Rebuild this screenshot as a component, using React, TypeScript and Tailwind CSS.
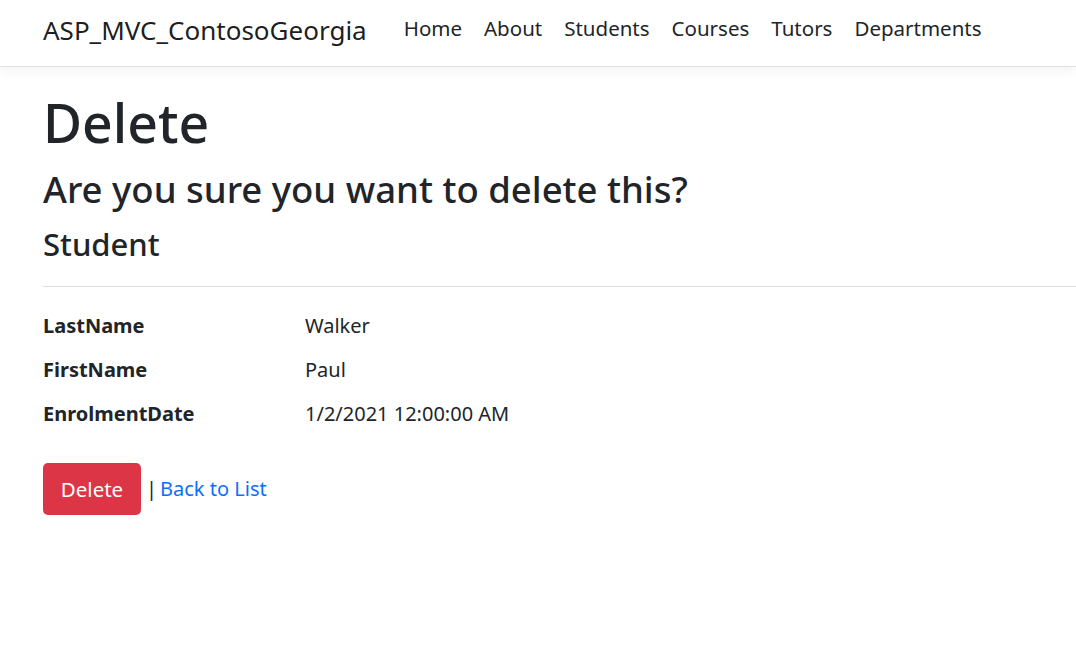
import React from "react";

const NAV_LINKS = ["Home", "About", "Students", "Courses", "Tutors", "Departments"];

const FIELDS = [
  { label: "LastName", value: "Walker" },
  { label: "FirstName", value: "Paul" },
  { label: "EnrolmentDate", value: "1/2/2021 12:00:00 AM" },
];

const App = () => {
  return (
    <div className="min-h-[667px] bg-white text-[#212529] font-['Segoe_UI','Noto_Sans',sans-serif]">
      {/* Navbar */}
      <nav className="h-[67px] flex items-start px-[43px] border-b border-[#dee2e6] shadow-[0_4px_12px_rgba(0,0,0,0.05)]">
        <a href="#" className="mt-[11px] text-[26px] leading-[39px] text-[rgba(0,0,0,0.9)] mr-[26px]">
          ASP_MVC_ContosoGeorgia
        </a>
        <ul className="flex mt-[13px]">
          {NAV_LINKS.map((link) => (
            <li key={link}>
              <a href="#" className="block px-[11px] text-[20.5px] leading-[30px] text-[#212529]">
                {link}
              </a>
            </li>
          ))}
        </ul>
      </nav>

      {/* Content */}
      <main className="pl-[43px] pt-[24px]">
        <h1 className="text-[53.5px] font-medium leading-[1.2]">Delete</h1>
        <h3 className="text-[36.5px] font-medium leading-[1.2] mt-[12.5px]">
          Are you sure you want to delete this?
        </h3>
        <div>
          <h4 className="text-[31px] font-medium leading-[1.2] mt-[15px]">Student</h4>
          <hr className="mt-[22px] mb-[24px] border-t border-[#dfdfdf]" />
          <dl className="grid grid-cols-[262px_1fr] gap-y-[14px] text-[20px] leading-[30px]">
            {FIELDS.map((f) => (
              <React.Fragment key={f.label}>
                <dt className="font-bold">{f.label}</dt>
                <dd>{f.value}</dd>
              </React.Fragment>
            ))}
          </dl>
          <form className="mt-[34px] flex items-center">
            <button
              type="button"
              className="h-[52px] w-[98px] rounded-[5px] bg-[#dc3545] text-white text-[20.5px] leading-[30px]"
            >
              Delete
            </button>
            <span className="ml-[5px] text-[20px] leading-[30px] text-[#212529]">|</span>
            <a href="#" className="ml-[3px] text-[20px] leading-[30px] text-[#0d6efd]">
              Back to List
            </a>
          </form>
        </div>
      </main>
    </div>
  );
};

export default App;
